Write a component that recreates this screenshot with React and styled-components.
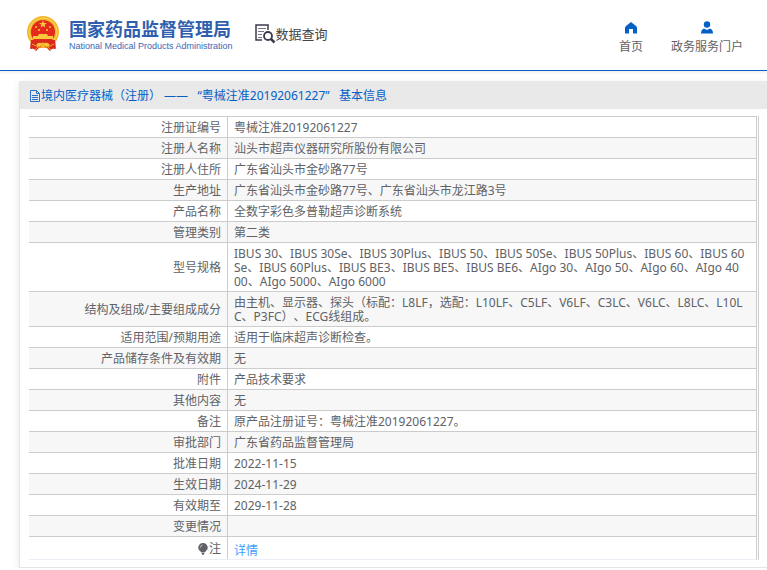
import React from "react"
import styled, { createGlobalStyle } from "styled-components"

const GlobalStyle = createGlobalStyle`
  * {
    box-sizing: border-box;
  }

  body {
    margin: 0;
    background: #fff;
    color: #606266;
    font-family: "Noto Sans", "Noto Sans CJK SC", sans-serif;
    font-size: 12px;
    line-height: 14px;
    text-spacing-trim: space-all;
  }
`

const rows = [
  ["注册证编号", "粤械注准20192061227"],
  ["注册人名称", "汕头市超声仪器研究所股份有限公司"],
  ["注册人住所", "广东省汕头市金砂路77号"],
  ["生产地址", "广东省汕头市金砂路77号、广东省汕头市龙江路3号"],
  ["产品名称", "全数字彩色多普勒超声诊断系统"],
  ["管理类别", "第二类"],
  [
    "型号规格",
    "IBUS 30、IBUS 30Se、IBUS 30Plus、IBUS 50、IBUS 50Se、IBUS 50Plus、IBUS 60、IBUS 60Se、IBUS 60Plus、IBUS BE3、IBUS BE5、IBUS BE6、AIgo 30、AIgo 50、AIgo 60、AIgo 4000、AIgo 5000、AIgo 6000",
  ],
  [
    "结构及组成/主要组成成分",
    "由主机、显示器、探头（标配：L8LF，选配：L10LF、C5LF、V6LF、C3LC、V6LC、L8LC、L10LC、P3FC）、ECG线组成。",
  ],
  ["适用范围/预期用途", "适用于临床超声诊断检查。"],
  ["产品储存条件及有效期", "无"],
  ["附件", "产品技术要求"],
  ["其他内容", "无"],
  ["备注", "原产品注册证号：粤械注准20192061227。"],
  ["审批部门", "广东省药品监督管理局"],
  ["批准日期", "2022-11-15"],
  ["生效日期", "2024-11-29"],
  ["有效期至", "2029-11-28"],
  ["变更情况", ""],
]

const Emblem = () => (
  <svg width="32" height="36" viewBox="0 0 32 36" aria-hidden="true">
    <path d="M4 23 L3 33 Q6 31 9 35 L12 32 H20 L23 35 Q26 31 29 33 L28 23 Z" fill="#dc281c" />
    <circle cx="16" cy="16" r="16" fill="#f3b62c" />
    <circle cx="16" cy="16" r="14" fill="none" stroke="#fbd75c" strokeWidth="1" />
    <circle cx="16" cy="16" r="12" fill="#e42a1d" />
    <path d="M16 4 L17 7 H20 L17.600 8.800 L18.500 11.600 L16 10 L13.500 11.600 L14.400 8.800 L12 7 H15 Z" fill="#f8c93a" />
    <g fill="#f8c93a">
      <circle cx="9" cy="11" r="1" />
      <circle cx="23" cy="11" r="1" />
      <circle cx="12" cy="14" r="1" />
      <circle cx="20" cy="14" r="1" />
      <path d="M12 18 H20 L21 20 H26 V23 H6 V20 H11 Z" />
    </g>
    <path d="M4 24 H28 V33 L22 31 H10 L4 33 Z" fill="#dc281c" />
    <path d="M9 29 Q12 25 16 28 Q20 25 23 29 L20 31 Q16 28 12 31 Z" fill="#f8c93a" />
    <circle cx="16" cy="29" r="2.500" fill="#f3b62c" />
    <path d="M5 28 L11 31 L8 34 M27 28 L21 31 L24 34" fill="none" stroke="#f0a52a" />
  </svg>
)

const SearchDocIcon = () => (
  <svg width="21" height="20" viewBox="0 0 21 20" fill="none" stroke="#3c3a4c" aria-hidden="true">
    <path d="M7 16 H1 V1 H13 V6" strokeWidth="1.500" />
    <path d="M3 4.500 H11 M3 7.500 H9 M3 10.500 H7 M3 13.500 H7" stroke="#77757f" />
    <circle cx="13" cy="12" r="4" strokeWidth="1.800" />
    <path d="M16 15 L19.500 18.500" strokeWidth="2.500" />
  </svg>
)

const HomeIcon = () => (
  <svg width="12" height="12" viewBox="0 0 12 12" aria-hidden="true">
    <path d="M6 0 L11 4 Q12 5 12 6 V11.500 H8 V7 H4 V11.500 H0 V6 Q0 5 1 4 Z" fill="#0560c6" />
  </svg>
)

const UserIcon = () => (
  <svg width="12" height="13" viewBox="0 0 12 13" fill="#0560c6" aria-hidden="true">
    <circle cx="6" cy="3.500" r="3.200" />
    <path d="M3 7.500 L6 9 L9 7.500 Q12 8.500 12 12.500 H0 Q0 8.500 3 7.500 Z" />
  </svg>
)

const DocIcon = () => (
  <svg width="12" height="12" viewBox="0 0 12 12" fill="none" stroke="#2a70c8" aria-hidden="true">
    <path d="M1.500 .5 H7.500 L10.500 3.500 V11.500 H1.500 Z M7.500 .5 V3.500 H10.500 M3 5.500 H9 M3 7.500 H9 M3 9.500 H9" />
  </svg>
)

const BulbIcon = () => (
  <svg width="11" height="12" viewBox="0 0 11 12" aria-hidden="true">
    <path d="M5 0 A4.500 4.500 0 0 1 8 8 L6.500 9.500 H3.500 L2 8 A4.500 4.500 0 0 1 5 0 Z M3.500 10 H6.500 L5.500 12 H4.500 Z" fill="#606266" />
    <path d="M2.500 4.500 Q2.500 2.500 4.500 2" fill="none" stroke="#ddd" strokeWidth=".8" />
  </svg>
)

const App = () => {
  return (
    <>
      <GlobalStyle />
      <Header>
        <Brand>
          <Emblem />
          <div>
            <BrandName>国家药品监督管理局</BrandName>
            <BrandSub>National Medical Products Administration</BrandSub>
          </div>
        </Brand>
        <Section>
          <SearchDocIcon />
          数据查询
        </Section>
        <Nav>
          <NavItem href="#home">
            <HomeIcon />
            首页
          </NavItem>
          <NavItem href="#portal">
            <UserIcon />
            政务服务门户
          </NavItem>
        </Nav>
      </Header>
      <Panel>
        <PanelTitle>
          <DocIcon />
          {"境内医疗器械（注册） ——   “粤械注准20192061227”   基本信息"}
        </PanelTitle>
        <TableFrame>
          <Table>
            <tbody>
              {rows.map(([label, value]) => (
                <Row key={label}>
                  <Label scope="row">{label}</Label>
                  <Value>{value}</Value>
                </Row>
              ))}
              <Row>
                <Label scope="row">
                  <Note>
                    <BulbIcon />注
                  </Note>
                </Label>
                <Value $last>
                  <DetailLink href="#detail">详情</DetailLink>
                </Value>
              </Row>
            </tbody>
          </Table>
        </TableFrame>
      </Panel>
    </>
  )
}

const Header = styled.header`
  display: flex;
  align-items: center;
  height: 71px;
  padding: 0 24px 0 27px;
  border-bottom: 1px solid #0560c6;
  box-shadow: 0 2px 2px #f3eff1;
`

const Brand = styled.div`
  display: flex;
  align-items: center;
  gap: 10px;
  padding-bottom: 2px;
`

const BrandName = styled.h1`
  margin: 0;
  color: #2f5fae;
  font-size: 18px;
  font-weight: 700;
  line-height: 24px;
  white-space: nowrap;
`

const BrandSub = styled.div`
  color: #3b68b4;
  font-family: "Liberation Sans", sans-serif;
  font-size: 9px;
  line-height: 10px;
  white-space: nowrap;
`

const Section = styled.div`
  display: flex;
  align-items: center;
  margin-left: 22px;
  padding-bottom: 2px;
  color: #444;
  font-size: 13px;
  line-height: 20px;
  white-space: nowrap;
`

const Nav = styled.nav`
  display: flex;
  gap: 28px;
  margin-left: auto;
  padding-top: 4px;
`

const NavItem = styled.a`
  display: flex;
  flex-direction: column;
  align-items: center;
  justify-content: flex-end;
  gap: 6px;
  color: #606266;
  text-decoration: none;
  white-space: nowrap;
`

const Panel = styled.main`
  margin: 10px 0 0 19px;
  padding-bottom: 7px;
  border: 1px solid #e4e4e6;
  border-width: 0 0 1px 1px;
  box-shadow: 0 2px 8px #e9e9ec;
`

const PanelTitle = styled.h2`
  display: flex;
  align-items: center;
  margin: 0;
  padding: 8px 9px 6px;
  background: #e9e9e9;
  color: #0560c6;
  font-size: 12px;
  font-weight: 400;
  white-space: pre;
`

const TableFrame = styled.div`
  margin: 7px 8px 0 9px;
  padding-right: 1px;
  border-right: 1px solid #ccc;
`

const Table = styled.table`
  width: 100%;
  border-collapse: separate;
  border-spacing: 0;
  border-right: 1px solid #ccc;
  border-bottom: 1px solid #ebeef5;
`

const Row = styled.tr`
  background: #fff;

  &:nth-child(even) {
    background: #f7f7f7;
  }

  &:last-child {
    background: #fff;
  }
`

const Label = styled.th`
  width: 199px;
  padding: 4px 6px 2px 0;
  border-top: 1px solid #ccc;
  border-right: 1px solid #ccc;
  font-weight: 400;
  text-align: right;
`

const Value = styled.td`
  height: 21px;
  padding: ${(p) => (p.$last ? "7px 11px 1px 6px" : "4px 11px 2px 6px")};
  border-top: 1px solid #ccc;
  word-break: break-all;
`

const Note = styled.span`
  display: flex;
  align-items: center;
  justify-content: flex-end;
`

const DetailLink = styled.a`
  color: #409eff;
  text-decoration: none;
`

export default App
